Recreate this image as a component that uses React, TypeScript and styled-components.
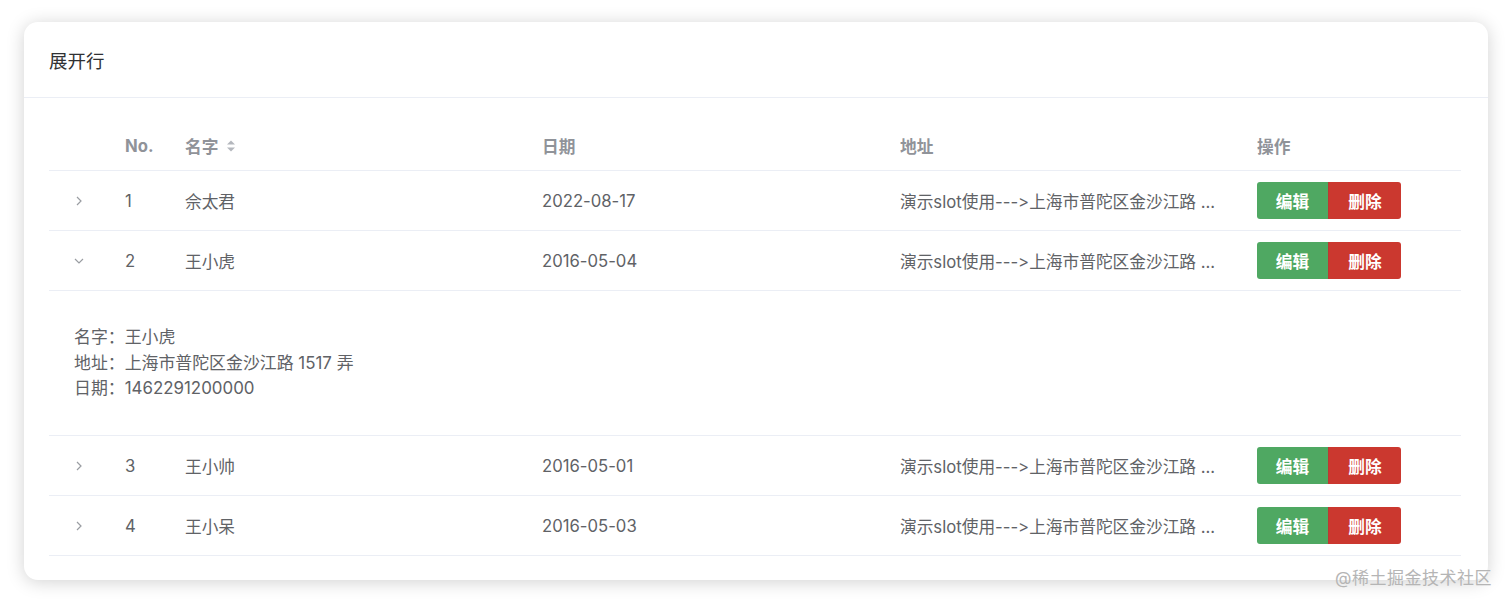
import React, { useState } from "react";
import styled, { createGlobalStyle } from "styled-components";

type Row = {
  no: number;
  name: string;
  date: string;
  address: string;
  stamp: string;
};

const rows: Row[] = [
  { no: 1, name: "佘太君", date: "2022-08-17", address: "上海市普陀区金沙江路 1516 弄", stamp: "1660694400000" },
  { no: 2, name: "王小虎", date: "2016-05-04", address: "上海市普陀区金沙江路 1517 弄", stamp: "1462291200000" },
  { no: 3, name: "王小帅", date: "2016-05-01", address: "上海市普陀区金沙江路 1519 弄", stamp: "1462032000000" },
  { no: 4, name: "王小呆", date: "2016-05-03", address: "上海市普陀区金沙江路 1516 弄", stamp: "1462204800000" },
];

const GlobalStyle = createGlobalStyle`
  html, body {
    margin: 0;
    background: #fff;
    font-family: Inter, "Noto Sans CJK SC", sans-serif;
    font-feature-settings: "liga" 0, "calt" 0;
    font-variant-ligatures: none;
    -webkit-font-smoothing: antialiased;
  }
`;

const Page = styled.div`
  position: relative;
  width: 1512px;
  height: 604px;
  padding: 22px 0 0 24px;
  box-sizing: border-box;
  overflow: hidden;
`;

const Card = styled.div`
  width: 1464px;
  height: 558px;
  box-sizing: border-box;
  background: #fff;
  border-radius: 14px;
  box-shadow: 0 2px 18px rgba(0, 0, 0, 0.18);
  overflow: hidden;
`;

const CardHeader = styled.div`
  height: 76px;
  box-sizing: border-box;
  padding: 0 25px;
  display: flex;
  align-items: center;
  border-bottom: 1px solid #ebeef5;
  font-size: 18.5px;
  color: #303133;
`;

const CardBody = styled.div`
  padding: 24px 27px 0 25px;
`;

const cols = "76px 60px 357px 358px 357px 204px";

const HeadRow = styled.div`
  display: grid;
  grid-template-columns: ${cols};
  height: 48px;
  align-items: center;
  border-bottom: 1px solid #ebeef5;
  font-size: 16.7px;
  font-weight: 700;
  color: #909399;
`;

const BodyRow = styled.div`
  display: grid;
  grid-template-columns: ${cols};
  height: 59px;
  align-items: center;
  border-bottom: 1px solid #ebeef5;
  font-size: 16.7px;
  color: #606266;
`;

const Cell = styled.div<{ $pr?: number }>`
  padding-right: ${(p) => p.$pr ?? 0}px;
  white-space: nowrap;
  overflow: hidden;
  display: flex;
  align-items: center;
  gap: 8px;
`;

const ExpandCell = styled.div`
  padding-left: 23px;
  display: flex;
  align-items: center;
  cursor: pointer;
`;

const Expanded = styled.div`
  height: 145px;
  box-sizing: border-box;
  padding: 34px 25px 0;
  border-bottom: 1px solid #ebeef5;
  font-size: 16.9px;
  line-height: 25.5px;
  color: #606266;
`;

const BtnGroup = styled.div`
  display: flex;
`;

const Btn = styled.button<{ $kind: "edit" | "del" }>`
  height: 37px;
  width: ${(p) => (p.$kind === "edit" ? 71 : 73)}px;
  border: none;
  padding: 0;
  font-family: inherit;
  font-size: 16.7px;
  font-weight: 700;
  color: #fff;
  background: ${(p) => (p.$kind === "edit" ? "#4fa862" : "#cb382f")};
  border-radius: ${(p) => (p.$kind === "edit" ? "3px 0 0 3px" : "0 3px 3px 0")};
  border-left: ${(p) => (p.$kind === "del" ? "1px solid #b93a33" : "none")};
`;

const Watermark = styled.div`
  position: absolute;
  right: 20px;
  bottom: 15px;
  font-size: 17px;
  color: #b5b5b5;
  letter-spacing: 0.5px;
`;

const SortIcon = () => (
  <svg width="10" height="14" viewBox="0 0 10 14">
    <path d="M5 1.5 L9 5.5 H1 Z" fill="#b4b7bd" />
    <path d="M5 12.5 L9 8.5 H1 Z" fill="#b4b7bd" />
  </svg>
);

const Chevron = ({ open }: { open: boolean }) => (
  <svg width="14" height="14" viewBox="0 0 14 14">
    <path
      d={open ? "M3 5 L7 9 L11 5" : "M5 3 L9 7 L5 11"}
      fill="none"
      stroke="#9a9da2"
      strokeWidth="1.2"
    />
  </svg>
);

export default function App() {
  const [open, setOpen] = useState<number[]>([2]);
  const toggle = (no: number) =>
    setOpen((o) => (o.includes(no) ? o.filter((n) => n !== no) : [...o, no]));

  return (
    <Page>
      <GlobalStyle />
      <Card>
        <CardHeader>展开行</CardHeader>
        <CardBody>
          <HeadRow>
            <Cell />
            <Cell>No.</Cell>
            <Cell>
              名字 <SortIcon />
            </Cell>
            <Cell>日期</Cell>
            <Cell>地址</Cell>
            <Cell>操作</Cell>
          </HeadRow>
          {rows.map((r) => (
            <React.Fragment key={r.no}>
              <BodyRow>
                <ExpandCell onClick={() => toggle(r.no)}>
                  <Chevron open={open.includes(r.no)} />
                </ExpandCell>
                <Cell>{r.no}</Cell>
                <Cell>{r.name}</Cell>
                <Cell>{r.date}</Cell>
                <Cell $pr={20}>演示slot使用---&gt;上海市普陀区金沙江路 ...</Cell>
                <Cell>
                  <BtnGroup>
                    <Btn $kind="edit">编辑</Btn>
                    <Btn $kind="del">删除</Btn>
                  </BtnGroup>
                </Cell>
              </BodyRow>
              {open.includes(r.no) && (
                <Expanded>
                  <div>名字：{r.name}</div>
                  <div>地址：{r.address}</div>
                  <div>日期：{r.stamp}</div>
                </Expanded>
              )}
            </React.Fragment>
          ))}
        </CardBody>
      </Card>
      <Watermark>@稀土掘金技术社区</Watermark>
    </Page>
  );
}
